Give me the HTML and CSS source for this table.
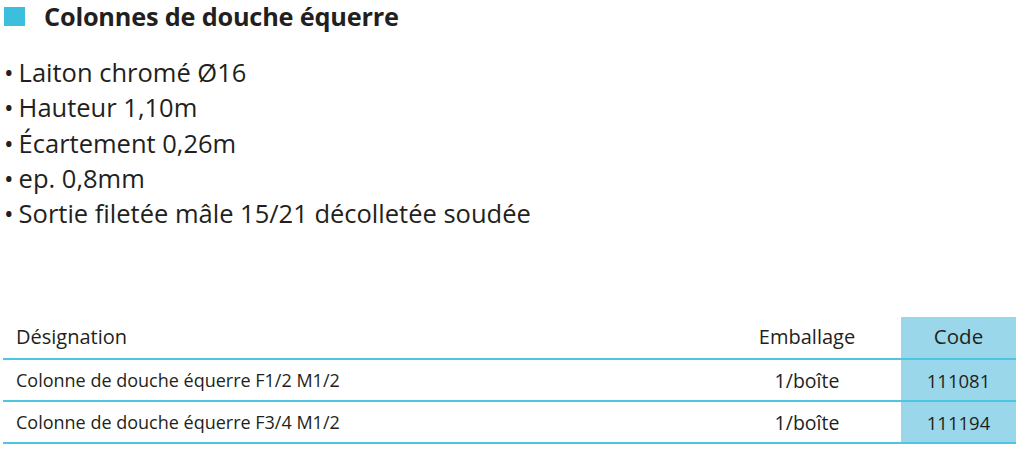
FILE: index.html
```
<!DOCTYPE html>
<html lang="fr">
<head>
  <meta charset="UTF-8">
  <title>Colonnes de douche équerre</title>
  <link rel="stylesheet" href="styles.css">
</head>
<body>
  <h1 class="title"><span class="square"></span>Colonnes de douche équerre</h1>

  <ul class="features">
    <li>Laiton chromé Ø16</li>
    <li>Hauteur 1,10m</li>
    <li>Écartement 0,26m</li>
    <li>ep. 0,8mm</li>
    <li>Sortie filetée mâle 15/21 décolletée soudée</li>
  </ul>

  <table class="products">
    <thead>
      <tr>
        <th class="name">Désignation</th>
        <th class="pack">Emballage</th>
        <th class="code">Code</th>
      </tr>
    </thead>
    <tbody>
      <tr>
        <td class="name">Colonne de douche équerre F1/2 M1/2</td>
        <td class="pack">1/boîte</td>
        <td class="code">111081</td>
      </tr>
      <tr>
        <td class="name">Colonne de douche équerre F3/4 M1/2</td>
        <td class="pack">1/boîte</td>
        <td class="code">111194</td>
      </tr>
    </tbody>
  </table>
</body>
</html>
```

FILE: styles.css
```
body {
  margin: 0;
  padding: 0 8px 0 3px;
  font-family: "Open Sans", "Noto Sans", sans-serif;
  color: #231f20;
  background: #fff;
}

.title {
  display: flex;
  align-items: center;
  margin: 0;
  padding: 1px 0 0 1px;
  height: 30px;
  font-size: 25.3px;
  font-weight: 700;
  letter-spacing: -0.2px;
}

.square {
  width: 21px;
  height: 19px;
  margin-right: 19px;
  background: #3bbfdc;
}

.features {
  list-style: none;
  margin: 24px 0 0;
  padding: 0;
  font-size: 25.5px;
  line-height: 35.3px;
}

.features li::before {
  content: "•";
  margin: 0 5px 0 1px;
}

.products {
  width: 1013px;
  margin-top: 86px;
  border-collapse: collapse;
  font-size: 18px;
}

.products th,
.products td {
  height: 40px;
  padding: 0;
  font-weight: 400;
  border-bottom: 2px solid #4ec6e0;
}

.products th {
  height: 38px;
  font-size: 20px;
  padding-bottom: 3px;
}

.products .name {
  text-align: left;
  padding-left: 13px;
}

.products .pack {
  width: 120px;
  text-align: center;
  padding-right: 34px;
  font-size: 19.5px;
}

.products th.pack {
  font-size: 20px;
}

.products .code {
  width: 115px;
  text-align: center;
  background: #9ad7ea;
  font-size: 18.5px;
}

.products th.code {
  font-size: 20.5px;
}
```
